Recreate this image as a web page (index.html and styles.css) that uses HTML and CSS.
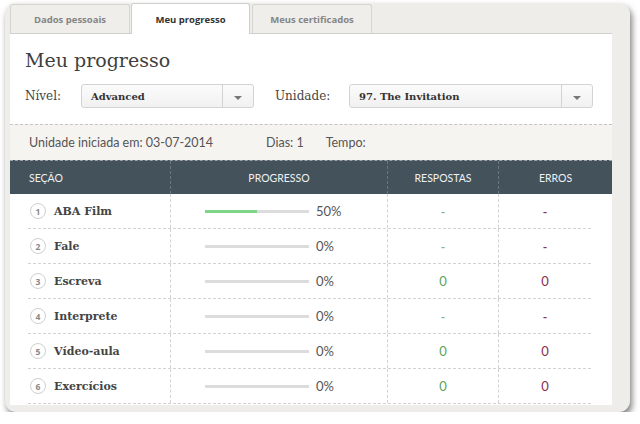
FILE: index.html
```html
<!DOCTYPE html>
<html lang="pt">
<head>
    <meta charset="UTF-8">
    <meta name="viewport" content="width=device-width, initial-scale=1.0">
    <title>Meu progresso</title>
    <link rel="stylesheet" href="styles.css">
</head>
<body>
    <div class="frame">
        <div class="tabs">
            <div class="tab">Dados pessoais</div>
            <div class="tab active">Meu progresso</div>
            <div class="tab">Meus certificados</div>
        </div>
        <div class="panel">
            <h1>Meu progresso</h1>
            <div class="filters">
                <label class="lbl-nivel">Nível:</label>
                <div class="select sel-nivel">
                    <span class="value">Advanced</span>
                    <span class="arrow"></span>
                </div>
                <label class="lbl-unidade">Unidade:</label>
                <div class="select sel-unidade">
                    <span class="value">97. The Invitation</span>
                    <span class="arrow"></span>
                </div>
            </div>
            <div class="info">
                <span>Unidade iniciada em: 03-07-2014</span>
                <span class="dias">Dias: 1</span>
                <span class="tempo">Tempo:</span>
            </div>
            <div class="thead">
                <div class="th th-secao">Seção</div>
                <div class="th">Progresso</div>
                <div class="th">Respostas</div>
                <div class="th">Erros</div>
            </div>
            <div class="tbody">
                <div class="row">
                    <div class="cell secao"><span class="num">1</span><span class="nome">ABA Film</span></div>
                    <div class="cell prog"><span class="bar"><span class="fill" style="width:50%"></span></span><span class="pct">50%</span></div>
                    <div class="cell ok dash">-</div>
                    <div class="cell err dash">-</div>
                </div>
                <div class="row">
                    <div class="cell secao"><span class="num">2</span><span class="nome">Fale</span></div>
                    <div class="cell prog"><span class="bar"><span class="fill" style="width:0%"></span></span><span class="pct">0%</span></div>
                    <div class="cell ok dash">-</div>
                    <div class="cell err dash">-</div>
                </div>
                <div class="row">
                    <div class="cell secao"><span class="num">3</span><span class="nome">Escreva</span></div>
                    <div class="cell prog"><span class="bar"><span class="fill" style="width:0%"></span></span><span class="pct">0%</span></div>
                    <div class="cell ok">0</div>
                    <div class="cell err">0</div>
                </div>
                <div class="row">
                    <div class="cell secao"><span class="num">4</span><span class="nome">Interprete</span></div>
                    <div class="cell prog"><span class="bar"><span class="fill" style="width:0%"></span></span><span class="pct">0%</span></div>
                    <div class="cell ok dash">-</div>
                    <div class="cell err dash">-</div>
                </div>
                <div class="row">
                    <div class="cell secao"><span class="num">5</span><span class="nome">Vídeo-aula</span></div>
                    <div class="cell prog"><span class="bar"><span class="fill" style="width:0%"></span></span><span class="pct">0%</span></div>
                    <div class="cell ok">0</div>
                    <div class="cell err">0</div>
                </div>
                <div class="row">
                    <div class="cell secao"><span class="num">6</span><span class="nome">Exercícios</span></div>
                    <div class="cell prog"><span class="bar"><span class="fill" style="width:0%"></span></span><span class="pct">0%</span></div>
                    <div class="cell ok">0</div>
                    <div class="cell err">0</div>
                </div>
            </div>
        </div>
    </div>
</body>
</html>
```

FILE: styles.css
```css
body {
    margin: 0;
    background-color: #fff;
    font-family: Lato, "Open Sans", sans-serif;
    color: #555;
}
.frame {
    margin: 3px 0 0 5px;
    width: 625px;
    height: 409px;
    box-sizing: border-box;
    padding: 1px 18px 7px 5px;
    background-color: #eeede9;
    border-radius: 11px;
    box-shadow: 2px 4px 6px rgba(0,0,0,0.5);
    overflow: hidden;
    display: flex;
    flex-direction: column;
}
.tabs {
    display: flex;
    gap: 1px;
    height: 29px;
    align-items: flex-end;
    position: relative;
    z-index: 1;
}
.tab {
    width: 120px;
    height: 29px;
    box-sizing: border-box;
    background-color: #efeeea;
    border: 1px solid #d6d5d1;
    border-bottom: none;
    border-radius: 3px 3px 0 0;
    font-family: "Open Sans", sans-serif;
    font-size: 9.5px;
    font-weight: bold;
    color: #858585;
    display: flex;
    align-items: center;
    justify-content: center;
}
.tab.active {
    width: 119px;
    height: 31px;
    margin-bottom: -1px;
    margin-right: 1px;
    background-color: #fff;
    border-color: #cfcfcb;
    color: #333;
}
.panel {
    flex: 1;
    background-color: #fff;
    border-top: 1px solid #cfcfcb;
    overflow: hidden;
}
h1 {
    margin: 0;
    padding: 14px 0 0 15px;
    font-family: "DejaVu Serif", serif;
    font-weight: normal;
    font-size: 19px;
    line-height: 24px;
    color: #3f3f3f;
}
.filters {
    display: flex;
    align-items: center;
    margin-top: 12px;
    padding-left: 15px;
    font-family: "DejaVu Serif", serif;
    font-size: 12px;
    color: #444;
}
.lbl-nivel {
    width: 56px;
}
.lbl-unidade {
    width: 74px;
    margin-left: 21px;
}
.select {
    height: 24px;
    box-sizing: border-box;
    border: 1px solid #d3d3d3;
    border-radius: 3px;
    background: linear-gradient(#fbfbfb, #f1f1f1);
    display: flex;
    align-items: center;
}
.sel-nivel {
    width: 173px;
}
.sel-unidade {
    width: 244px;
}
.select .value {
    flex: 1;
    padding-left: 9px;
    font-size: 10px;
    font-weight: bold;
    color: #333;
}
.select .arrow {
    width: 30px;
    height: 100%;
    border-left: 1px solid #d3d3d3;
    display: flex;
    align-items: center;
    justify-content: center;
}
.select .arrow::after {
    content: "";
    border-left: 4px solid transparent;
    border-right: 4px solid transparent;
    border-top: 4px solid #777;
    margin-top: 3px;
}
.info {
    margin-top: 16px;
    height: 36px;
    box-sizing: border-box;
    border-top: 1px dashed #c4c4c4;
    background-color: #f5f4f1;
    padding-left: 19px;
    display: flex;
    align-items: center;
    font-size: 12.5px;
    color: #555;
}
.dias {
    margin-left: 53px;
}
.tempo {
    margin-left: 22px;
}
.thead {
    height: 34px;
    box-sizing: border-box;
    border-top: 1px dashed #9aa2a7;
    background-color: #44525c;
    padding-left: 18px;
    display: grid;
    grid-template-columns: 142px 217px 111px 1fr;
    font-size: 10.5px;
    text-transform: uppercase;
    color: #eef1f2;
}
.th {
    display: flex;
    align-items: center;
    justify-content: center;
    border-left: 1px dashed #6c7880;
}
.th.th-secao {
    justify-content: flex-start;
    padding-left: 1px;
    border-left: none;
}
.tbody {
    margin: 0 21px 0 18px;
}
.row {
    height: 35px;
    box-sizing: border-box;
    border-bottom: 1px dashed #d2d2d2;
    display: grid;
    grid-template-columns: 142px 217px 111px 1fr;
}
.cell {
    display: flex;
    align-items: center;
    justify-content: center;
    border-left: 1px dashed #d2d2d2;
    font-size: 13px;
}
.cell.secao {
    justify-content: flex-start;
    border-left: none;
    padding-left: 2px;
}
.num {
    width: 14px;
    height: 14px;
    border: 1.5px solid #cfcfcf;
    border-radius: 50%;
    font-family: "Open Sans", sans-serif;
    font-size: 8.5px;
    font-weight: bold;
    color: #888;
    display: flex;
    align-items: center;
    justify-content: center;
}
.nome {
    margin-left: 8px;
    font-family: "DejaVu Serif", serif;
    font-size: 11px;
    font-weight: bold;
    color: #444;
}
.cell.prog {
    justify-content: flex-start;
    padding-left: 34px;
}
.bar {
    width: 104px;
    height: 3px;
    background-color: #dcdcdc;
}
.fill {
    display: block;
    height: 100%;
    background-color: #7ed58a;
}
.pct {
    margin-left: 7px;
    color: #555;
}
.ok {
    color: #5aa35c;
}
.err {
    color: #8c2d4e;
}
.dash {
    font-size: 12px;
    font-weight: bold;
}
.ok.dash {
    color: #7fb883;
}
```
